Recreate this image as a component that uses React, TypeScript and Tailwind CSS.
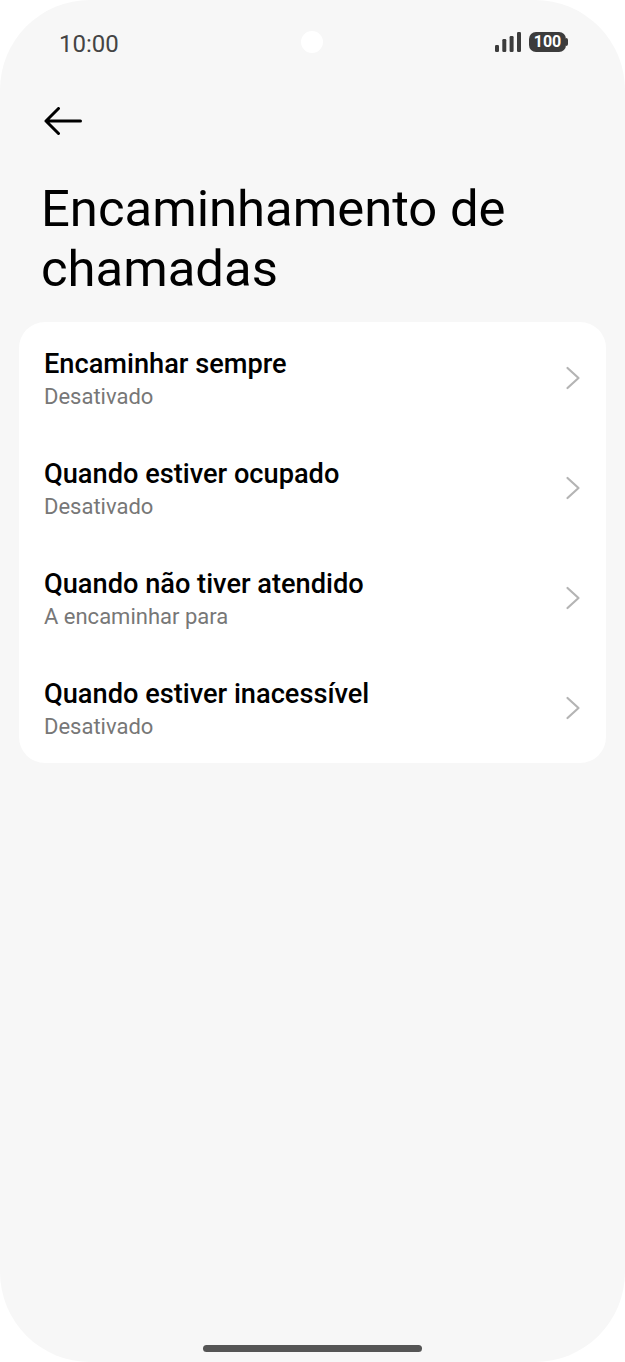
const rows = [
  { title: "Encaminhar sempre", sub: "Desativado" },
  { title: "Quando estiver ocupado", sub: "Desativado" },
  { title: "Quando não tiver atendido", sub: "A encaminhar para" },
  { title: "Quando estiver inacessível", sub: "Desativado" },
];

export default function App() {
  return (
    <div className="h-[1362px] w-[625px] bg-white font-['Roboto',sans-serif]">
      <div className="relative flex h-full flex-col rounded-[90px] bg-[#f7f7f7]">
        {/* status bar */}
        <div className="flex h-[86px] items-center justify-between pl-[59px] pr-[59px]">
          <span className="mt-[1px] text-[24px] leading-none text-[#444]">10:00</span>
          <div className="mb-[2px] flex items-center gap-[8px]">
            <svg width="26" height="20" viewBox="0 0 26 20" fill="#3c3c3c">
              <rect x="0" y="13" width="4" height="7" rx="1.2" />
              <rect x="7.3" y="7" width="4" height="13" rx="1.2" />
              <rect x="14.6" y="4" width="4" height="16" rx="1.2" />
              <rect x="22" y="0" width="4" height="20" rx="1.2" />
            </svg>
            <div className="relative flex h-[20px] w-[37px] items-center justify-center rounded-[7px] bg-[#3c3c3c] text-[16px] font-bold leading-none text-white">
              100
              <span className="absolute right-[-2px] top-[6px] h-[8px] w-[2px] rounded-r-sm bg-[#3c3c3c]" />
            </div>
          </div>
        </div>
        <div className="absolute left-[301px] top-[31px] h-[22px] w-[22px] rounded-full bg-white" />

        {/* back arrow */}
        <div className="mt-[21px] pl-[44px]">
          <svg width="38" height="28" viewBox="0 0 38 28" fill="none" stroke="#000" strokeWidth="3" strokeLinecap="round" strokeLinejoin="round" className="block">
            <path d="M36.5 14H2M14.5 1.5 2 14l12.5 12.5" />
          </svg>
        </div>

        <h1 className="mt-[44px] pl-[41px] text-[50.8px] font-normal leading-[60px] text-black">
          Encaminhamento de
          <br />
          chamadas
        </h1>

        {/* list card */}
        <div className="mx-[19px] mt-[23px] rounded-[26px] bg-white">
          {rows.map((row) => (
            <div key={row.title} className="flex h-[110px] items-center justify-between pl-[25px] pr-[25px] first:h-[111px]">
              <div className="mt-[3px] flex flex-col">
                <span className="text-[27.2px] font-medium leading-[34px] text-black">{row.title}</span>
                <span className="mt-[1px] text-[22px] leading-[30px] text-[#777]">{row.sub}</span>
              </div>
              <svg width="16" height="24" viewBox="0 0 16 24" fill="none" stroke="#b4b4b4" strokeWidth="2.2" strokeLinecap="round" strokeLinejoin="round">
                <path d="M2.5 2 13.5 12 2.5 22" />
              </svg>
            </div>
          ))}
        </div>

        {/* home indicator */}
        <div className="absolute bottom-[10px] left-[203px] h-[7px] w-[219px] rounded-full bg-[#555]" />
      </div>
    </div>
  );
}
